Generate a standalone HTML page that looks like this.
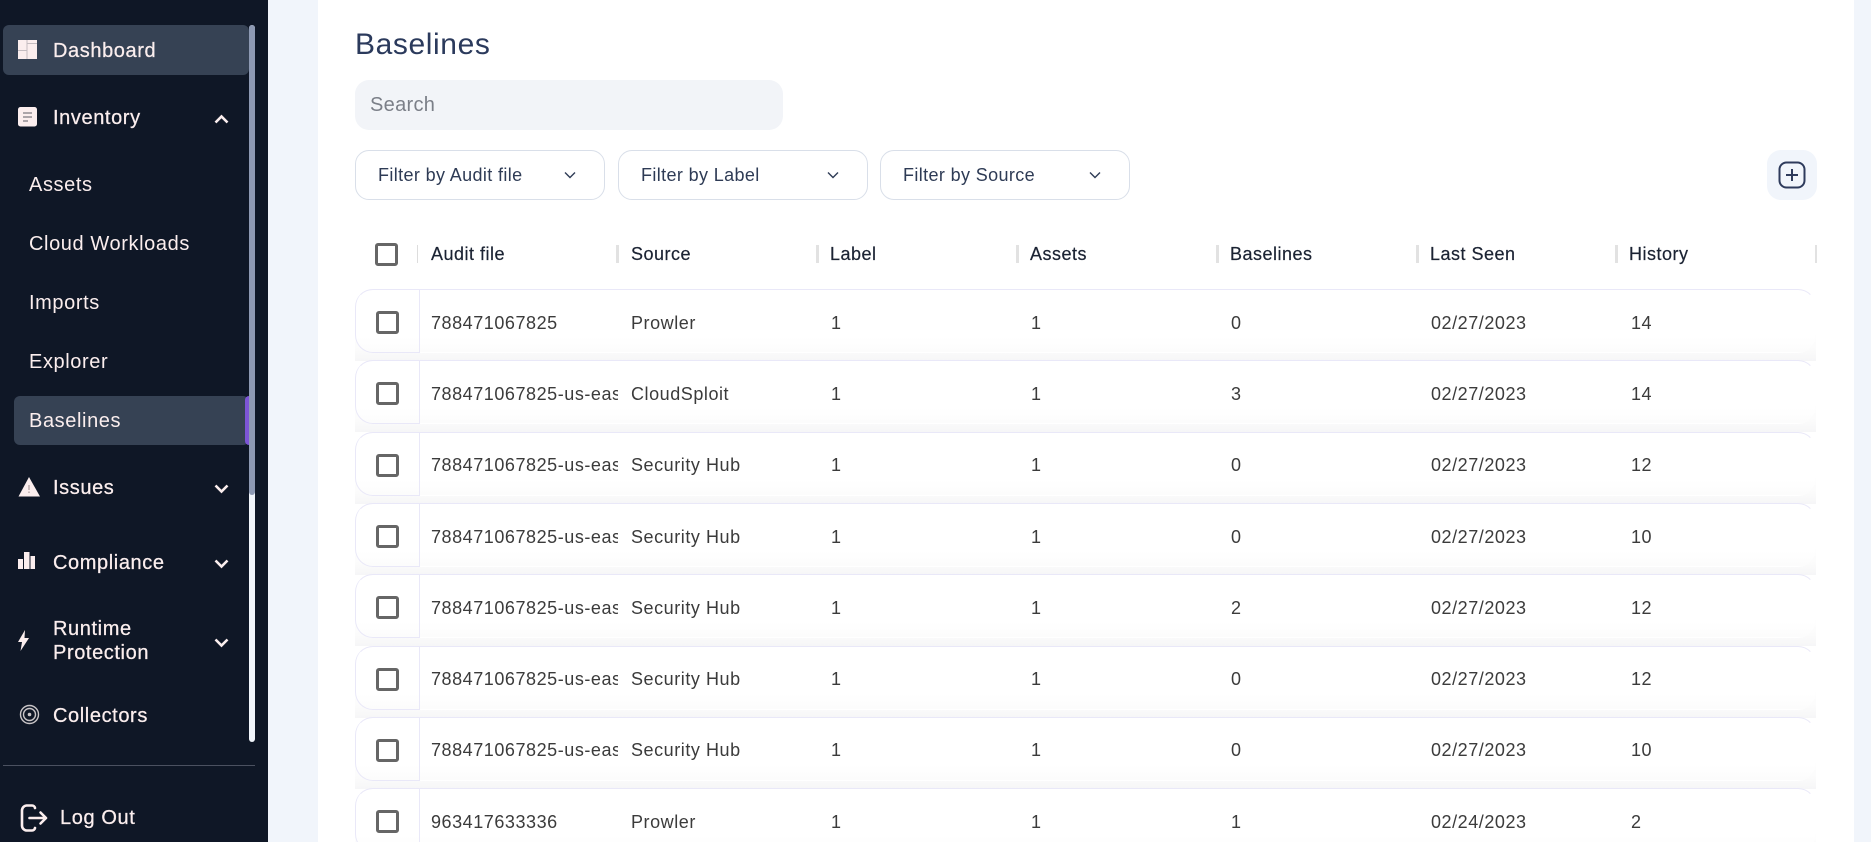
<!DOCTYPE html>
<html><head><meta charset="utf-8"><style>
*{box-sizing:border-box}
html,body{margin:0;padding:0;width:1871px;height:842px;overflow:hidden;background:#f1f5fb;font-family:"Liberation Sans",sans-serif}
.a{position:absolute}
#w{position:absolute;left:0;top:0;width:1871px;height:842px;overflow:hidden;z-index:0}
#side{left:0;top:0;width:268px;height:842px;background:#0f1726;overflow:hidden;z-index:5}
.n{position:absolute;color:#fbeeee;font-size:20px;line-height:24px;white-space:nowrap;letter-spacing:.6px}
.m{left:53px;-webkit-text-stroke:.25px #fbeeee}
.s{left:29px}
#card{left:318px;top:-20px;width:1536px;height:900px;background:#fff;border-radius:18px;z-index:-2}
.f{position:absolute;top:150px;width:250px;height:50px;border:1px solid #d9dfe9;border-radius:14px;background:#fff;color:#2e3b55;font-size:18px;line-height:48px;padding-left:22px;letter-spacing:.37px}
.f svg{position:absolute;right:26px;top:18px}
.h{position:absolute;top:242px;font-size:18px;line-height:24px;color:#1b2333;letter-spacing:.5px;white-space:nowrap;-webkit-text-stroke:.2px #1b2333}
.sep{position:absolute;top:245px;width:3px;height:18px;background:#e2e2e2}
.r{position:absolute;left:355px;width:1461px;height:64px;border:1px solid transparent;border-top-color:#e9e8f8;border-radius:18px;background:linear-gradient(#fff 75%,#fcfcfc)}
.r::before{content:"";position:absolute;left:-1px;right:-1px;top:40px;height:31px;background:linear-gradient(#fff,#fbfbfb 65%,#f6f6f7);z-index:-1}
.cb{position:absolute;left:20px;top:21px;width:23px;height:23px;border:3px solid #666;border-radius:3px;background:#fff}
.d{position:absolute;left:-1px;top:-1px;width:65px;height:64px;border:1px solid #e9e8f8;border-top:0;border-radius:18px 0 0 18px}
.t{position:absolute;top:20.500px;font-size:18px;line-height:24px;color:#3b3b3b;letter-spacing:.55px;white-space:nowrap}
.c1{left:75px;width:187px;overflow:hidden}.c2{left:275px}.c3{left:475px}.c4{left:675px}.c5{left:875px}.c6{left:1075px}.c7{left:1275px}
</style></head><body>
<div id="w">
<div id="side" class="a">
<div class="a" style="left:3px;top:25px;width:246px;height:50px;background:#364254;border-radius:6px"></div>
<div class="a" style="left:14px;top:396px;width:235px;height:49px;background:#364254;border-radius:6px"></div>
<div class="a" style="left:245px;top:396px;width:4px;height:49px;background:#7d55d6;border-radius:4px 0 0 4px"></div>
<div class="a" style="left:249px;top:25px;width:6px;height:717px;background:#f1f5fb;border-radius:3px"></div>
<div class="a" style="left:249px;top:25px;width:6px;height:470px;background:#8d99b3;border-radius:3px"></div>
<div class="a" style="left:3px;top:765px;width:252px;height:1px;background:#4b5160"></div>

<svg class="a" style="left:18px;top:40px" width="19" height="19" viewBox="0 0 19 19"><rect width="19" height="19" fill="#fbeeee"/><path d="M9 0v19M0 10.500h9M9 3.500h10" stroke="#c4bcc0" stroke-width="1"/></svg>
<svg class="a" style="left:18px;top:107px" width="19" height="20" viewBox="0 0 19 20"><rect width="19" height="19.500" rx="2.500" fill="#fbeeee"/><path d="M5 6h9M5 10h9M5 14h5" stroke="#7d7a80" stroke-width="1.300"/></svg>
<svg class="a" style="left:18px;top:476px" width="22" height="21" viewBox="0 0 22 21"><path fill="#fbeeee" d="M11 1 22 20.500H.5z"/><path d="M11 9v5M11 15.500v1.500" stroke="#9a8a8a" stroke-width="1"/></svg>
<svg class="a" style="left:18px;top:552px" width="17" height="17" viewBox="0 0 17 17"><path fill="#fbeeee" d="M0 7h5v10H0zM6 0h5.500v17H6zM12.500 4H17v13h-4.500z"/></svg>
<svg class="a" style="left:18px;top:630px" width="11" height="21" viewBox="0 0 11 21"><path fill="#fbeeee" d="M7 0 0 12h4l-1.500 9L11 8H6.500z"/></svg>
<svg class="a" style="left:19px;top:704px" width="21" height="21" viewBox="0 0 21 21" fill="none" stroke="#c9c5c7"><circle cx="10.500" cy="10.500" r="9" stroke-width="1.400"/><circle cx="10.500" cy="10.500" r="6" stroke-width="1.400"/><circle cx="10.500" cy="10.500" r="1.800" fill="#c9c5c7" stroke="none"/></svg>
<svg class="a" style="left:20px;top:804px" width="28" height="28" viewBox="0 0 28 28" fill="none" stroke="#fbeeee" stroke-width="2.600" stroke-linecap="round" stroke-linejoin="round"><path d="M15 4a3 3 0 0 0-3-2.500H6.500A5 5 0 0 0 2 6.500v15a5 5 0 0 0 4.500 5H12a3 3 0 0 0 3-2.500"/><path d="M9.500 14H26M20.500 8.500 26 14l-5.500 5.500"/></svg>

<svg class="a" style="left:214px;top:114px" width="15" height="10" viewBox="0 0 15 10" fill="none" stroke="#fbeeee" stroke-width="2.600"><path d="M1.500 8.500 7.500 2.500l6 6"/></svg>
<svg class="a" style="left:214px;top:484px" width="15" height="10" viewBox="0 0 15 10" fill="none" stroke="#fbeeee" stroke-width="2.600"><path d="M1.500 1.500l6 6 6-6"/></svg>
<svg class="a" style="left:214px;top:559px" width="15" height="10" viewBox="0 0 15 10" fill="none" stroke="#fbeeee" stroke-width="2.600"><path d="M1.500 1.500l6 6 6-6"/></svg>
<svg class="a" style="left:214px;top:638px" width="15" height="10" viewBox="0 0 15 10" fill="none" stroke="#fbeeee" stroke-width="2.600"><path d="M1.500 1.500l6 6 6-6"/></svg>

<div class="n m" style="top:39px">Dashboard</div>
<div class="n m" style="top:106px">Inventory</div>
<div class="n s" style="top:173px">Assets</div>
<div class="n s" style="top:232px">Cloud Workloads</div>
<div class="n s" style="top:291px">Imports</div>
<div class="n s" style="top:350px">Explorer</div>
<div class="n s" style="top:409px">Baselines</div>
<div class="n m" style="top:476px">Issues</div>
<div class="n m" style="top:551px">Compliance</div>
<div class="n m" style="top:617px">Runtime</div>
<div class="n m" style="top:641px">Protection</div>
<div class="n m" style="top:704px">Collectors</div>
<div class="n m" style="left:60px;top:806px">Log Out</div>
</div>

<div id="card" class="a"></div>
<div class="a" style="left:355px;top:27px;font-size:30px;line-height:36px;color:#2b3a5c;letter-spacing:.6px">Baselines</div>
<div class="a" style="left:355px;top:80px;width:428px;height:50px;background:#f2f4f8;border-radius:14px;color:#7b7f88;font-size:20px;line-height:50px;padding-left:15px;letter-spacing:.3px">Search</div>
<div class="f" style="left:355px">Filter by Audit file<svg width="16" height="12" viewBox="0 0 16 12" fill="none" stroke="#2e3b55" stroke-width="1.400"><path d="M3 3.500l5 5 5-5"/></svg></div>
<div class="f" style="left:618px">Filter by Label<svg width="16" height="12" viewBox="0 0 16 12" fill="none" stroke="#2e3b55" stroke-width="1.400"><path d="M3 3.500l5 5 5-5"/></svg></div>
<div class="f" style="left:880px">Filter by Source<svg width="16" height="12" viewBox="0 0 16 12" fill="none" stroke="#2e3b55" stroke-width="1.400"><path d="M3 3.500l5 5 5-5"/></svg></div>
<div class="a" style="left:1767px;top:150px;width:50px;height:50px;background:#f1f5fb;border-radius:14px"></div>
<svg class="a" style="left:1778px;top:161px" width="28" height="28" viewBox="0 0 28 28" fill="none" stroke="#2e3b5c" stroke-width="2"><rect x="1.500" y="1.500" width="25" height="25" rx="7"/><path d="M14 8v12M8 14h12"/></svg>

<div class="a" style="left:375px;top:243px;width:23px;height:23px;border:3px solid #666;border-radius:3px"></div>
<div class="sep" style="left:417px;width:1px;background:#ddd"></div>
<div class="sep" style="left:616px"></div><div class="sep" style="left:816px"></div><div class="sep" style="left:1016px"></div><div class="sep" style="left:1216px"></div><div class="sep" style="left:1416px"></div><div class="sep" style="left:1615px"></div><div class="sep" style="left:1815px;width:2px"></div>
<div class="h" style="left:431px">Audit file</div><div class="h" style="left:631px">Source</div><div class="h" style="left:830px">Label</div><div class="h" style="left:1030px">Assets</div><div class="h" style="left:1230px">Baselines</div><div class="h" style="left:1430px">Last Seen</div><div class="h" style="left:1629px">History</div>

<div class="r" style="top:289px"><div class="cb"></div><div class="d"></div><div class="t c1">788471067825</div><div class="t c2">Prowler</div><div class="t c3">1</div><div class="t c4">1</div><div class="t c5">0</div><div class="t c6">02/27/2023</div><div class="t c7">14</div></div>
<div class="r" style="top:360.300px"><div class="cb"></div><div class="d"></div><div class="t c1">788471067825-us-east-1</div><div class="t c2">CloudSploit</div><div class="t c3">1</div><div class="t c4">1</div><div class="t c5">3</div><div class="t c6">02/27/2023</div><div class="t c7">14</div></div>
<div class="r" style="top:431.600px"><div class="cb"></div><div class="d"></div><div class="t c1">788471067825-us-east-1</div><div class="t c2">Security Hub</div><div class="t c3">1</div><div class="t c4">1</div><div class="t c5">0</div><div class="t c6">02/27/2023</div><div class="t c7">12</div></div>
<div class="r" style="top:503px"><div class="cb"></div><div class="d"></div><div class="t c1">788471067825-us-east-1</div><div class="t c2">Security Hub</div><div class="t c3">1</div><div class="t c4">1</div><div class="t c5">0</div><div class="t c6">02/27/2023</div><div class="t c7">10</div></div>
<div class="r" style="top:574.200px"><div class="cb"></div><div class="d"></div><div class="t c1">788471067825-us-east-1</div><div class="t c2">Security Hub</div><div class="t c3">1</div><div class="t c4">1</div><div class="t c5">2</div><div class="t c6">02/27/2023</div><div class="t c7">12</div></div>
<div class="r" style="top:645.500px"><div class="cb"></div><div class="d"></div><div class="t c1">788471067825-us-east-1</div><div class="t c2">Security Hub</div><div class="t c3">1</div><div class="t c4">1</div><div class="t c5">0</div><div class="t c6">02/27/2023</div><div class="t c7">12</div></div>
<div class="r" style="top:716.800px"><div class="cb"></div><div class="d"></div><div class="t c1">788471067825-us-east-1</div><div class="t c2">Security Hub</div><div class="t c3">1</div><div class="t c4">1</div><div class="t c5">0</div><div class="t c6">02/27/2023</div><div class="t c7">10</div></div>
<div class="r" style="top:788px"><div class="cb"></div><div class="d"></div><div class="t c1">963417633336</div><div class="t c2">Prowler</div><div class="t c3">1</div><div class="t c4">1</div><div class="t c5">1</div><div class="t c6">02/24/2023</div><div class="t c7">2</div></div>
</div>
</body></html>
